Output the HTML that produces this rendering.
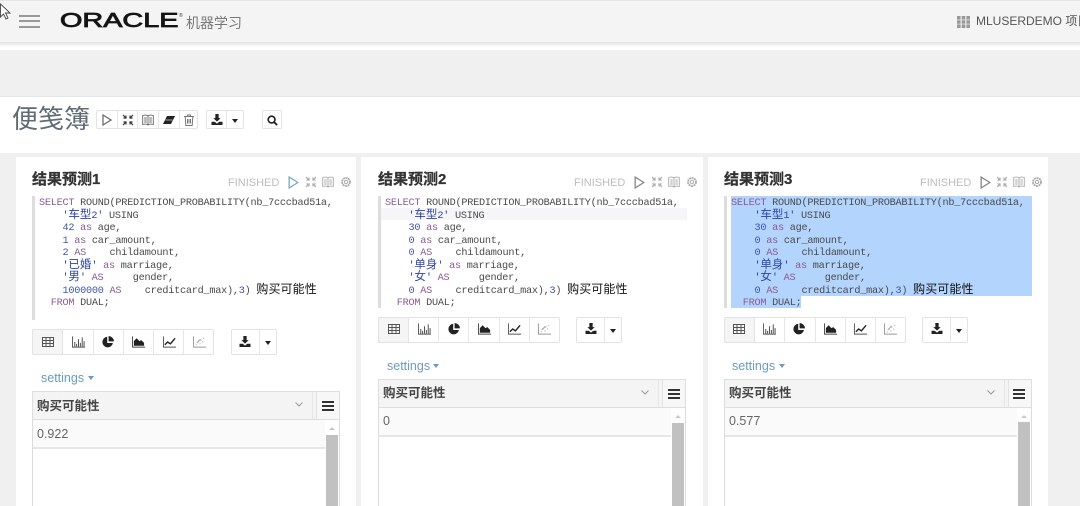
<!DOCTYPE html>
<html><head><meta charset="utf-8">
<style>
html,body{margin:0;padding:0}
body{width:1080px;height:506px;overflow:hidden;position:relative;background:#f0f0f1;font-family:"Liberation Sans","Noto Sans CJK SC",sans-serif;color:#444;filter:blur(.3px)}
div,span,svg,pre{position:absolute}
pre span,.t span{position:static}
.panel{background:#fff;top:157px;height:349px}
.title{font-size:15px;font-weight:bold;color:#333;top:171px;line-height:18px;white-space:nowrap;-webkit-text-stroke:.25px #333}
.fin{font-size:11px;color:#bdbdbd;top:177px;line-height:13px}
pre{margin:0;font:10.2px/12.5px "Liberation Mono","Noto Sans CJK SC",monospace;letter-spacing:-.24px;color:#4a4a4a;white-space:pre;top:198px}
pre .k{color:#8a5a94}pre .n{color:#3f55ad}pre .s{color:#2d44a8}
pre .c{font-size:11.5px;letter-spacing:0;line-height:0}
pre .b{color:#111;font-size:12px;font-family:"Liberation Sans","Noto Sans CJK SC",sans-serif;letter-spacing:.1px;line-height:0}
.bar{width:3px;background:#ddd}
.btn{border:1px solid #e3e3e3;box-sizing:border-box;background:#fff;border-radius:2px}
.set{font-size:12.5px;color:#6a9bc3;line-height:15px}
.car{width:0;height:0;border-left:3.5px solid transparent;border-right:3.5px solid transparent;border-top:4px solid currentColor}
.th{background:#f4f4f4;border:1px solid #dedede;box-sizing:border-box;height:29px;width:308px}
.thx{font-size:12.5px;font-weight:bold;color:#444;line-height:16px;white-space:nowrap}
.val{font-size:12.5px;color:#666;line-height:15px}
.rl{height:2px;background:#e6e6e6}
.bd{width:1px;background:#dcdcdc;top:419px;height:87px}
.sb{width:12px;background:#c1c1c1;height:71px;top:435px}
</style></head><body>
<svg width="0" height="0" style="left:0;top:0">
<defs>
<symbol id="table" viewBox="0 0 12 12"><path d="M.5 1.500h11v9H.5zM.5 4.500h11M.5 7.500h11M4 1.500v9M8 1.500v9" fill="none" stroke="#555" stroke-width="1"/></symbol>
<symbol id="bars" viewBox="0 0 14 12"><path d="M.5 0v11.500H14" fill="none" stroke="#555"/><path d="M3 6v5M5 8v3M7 3v8M9 7v4M11 1v10M13 5v6" stroke="#444" stroke-width="1"/></symbol>
<symbol id="pie" viewBox="0 0 12 12"><path d="M5.200.8A5.300 5.300 0 1 0 10.900 7H5.200zM6.600 0v5.400H12A5.600 5.600 0 0 0 6.600 0z" fill="#222"/></symbol>
<symbol id="area" viewBox="0 0 14 12"><path d="M.5 0v11.500H14" fill="none" stroke="#444"/><path d="M2 10V5l3-3 3 3 2-1 3 3v3z" fill="#222"/></symbol>
<symbol id="line" viewBox="0 0 14 12"><path d="M.5 0v11.500H14" fill="none" stroke="#555"/><path d="M2 9l3-3 3 2 5-6" fill="none" stroke="#222" stroke-width="1.500"/></symbol>
<symbol id="scat" viewBox="0 0 14 12"><path d="M.5 0v11.500H14" fill="none" stroke="#999"/><path d="M3 9h1M5 6h1M7 8h1M8 4h1M10 6h1M11 2h1M4 7l4-4" stroke="#999" stroke-width="1" fill="none"/></symbol>
<symbol id="dl" viewBox="0 0 12 12"><path d="M4.200 0h3.600v4.500H10L6 8.300 2 4.500h2.200zM0 8.500h3.500L6 10.500l2.500-2H12V12H0z" fill="#222"/></symbol>
<symbol id="play" viewBox="0 0 10 12"><path d="M1 1l8 5-8 5z" fill="none" stroke="currentColor" stroke-width="1.200"/></symbol>
<symbol id="exp" viewBox="0 0 12 12"><path d="M1 1l3 3M4 1.500V4H1.500M11 1L8 4M8 1.500V4h2.500M1 11l3-3M4 10.500V8H1.500M11 11L8 8M8 10.500V8h2.500" fill="none" stroke="currentColor" stroke-width="1.200"/></symbol>
<symbol id="book" viewBox="0 0 12 12"><path d="M6 2C5 1 2.500 1 .7 1.500v9C2.500 10 5 10 6 11c1-1 3.500-1 5.300-.5v-9C9.500 1 7 1 6 2zM6 2v9M2.200 4h2.500M2.200 6h2.500M2.200 8h2.500M7.300 4h2.500M7.300 6h2.500M7.300 8h2.500" fill="none" stroke="currentColor" stroke-width=".9"/></symbol>
<symbol id="gear" viewBox="0 0 12 12"><circle cx="6" cy="6" r="4" fill="none" stroke="currentColor" stroke-width="1.800" stroke-dasharray="2 .6"/><circle cx="6" cy="6" r="1.700" fill="none" stroke="currentColor"/></symbol>
<symbol id="eraser" viewBox="0 0 12 9"><path d="M4 0h8L8 8H0z" fill="#222"/><path d="M2.500 4h7" stroke="#fff" stroke-width=".6"/></symbol>
<symbol id="trash" viewBox="0 0 10 12"><path d="M0 2.500h10M3.500 2.500V1h3v1.500M1.200 2.500l.6 9h6.400l.6-9M3.500 5v4.500M5 5v4.500M6.500 5v4.500" fill="none" stroke="#777" stroke-width="1"/></symbol>
<symbol id="search" viewBox="0 0 12 12"><circle cx="5" cy="5" r="3.700" fill="none" stroke="#222" stroke-width="1.800"/><path d="M7.800 7.800L11 11" stroke="#222" stroke-width="2"/></symbol>
</defs></svg>

<!-- header -->
<div style="left:0;top:0;width:1080px;height:43px;background:#f4f4f5;border-top:1px solid #e6e6e6;box-sizing:border-box"></div>
<div style="left:0;top:42px;width:1080px;height:8px;background:linear-gradient(#e2e2e2,#fff 65%)"></div>
<div style="left:0;top:50px;width:1080px;height:46px;background:#f0f0f1"></div>
<div style="left:0;top:96px;width:1080px;height:57px;background:#fff;border-top:1px solid #e8e8e8;box-sizing:border-box"></div>

<!-- cursor -->
<svg style="left:0;top:3px" width="12" height="18" viewBox="0 0 12 18"><path d="M.5 1v13l3-3 2.500 5 2-1-2.500-5H10z" fill="#fff" stroke="#444" stroke-width=".9"/></svg>
<!-- hamburger -->
<div style="left:19px;top:15px;width:21px;height:2px;background:#999"></div>
<div style="left:19px;top:20px;width:21px;height:2px;background:#999"></div>
<div style="left:19px;top:26px;width:21px;height:2px;background:#999"></div>

<span style="left:60px;top:10px;font-size:20px;line-height:22px;color:#151515;transform:scaleX(1.44);transform-origin:0 0;-webkit-text-stroke:.8px #151515;white-space:nowrap">ORACLE</span>
<span style="left:179px;top:13px;font-size:5px;color:#333;line-height:6px">®</span>
<span style="left:186px;top:15px;font-size:14px;line-height:17px;color:#777;white-space:nowrap">机器学习</span>

<svg style="left:957px;top:16px" width="13" height="12" viewBox="0 0 13 12"><path d="M0 0h3.600v3.600H0zM4.700 0h3.600v3.600H4.700zM9.400 0H13v3.600H9.400zM0 4.200h3.600v3.600H0zM4.700 4.200h3.600v3.600H4.700zM9.400 4.200H13v3.600H9.400zM0 8.400h3.600V12H0zM4.700 8.400h3.600V12H4.700zM9.400 8.400H13V12H9.400z" fill="#999"/></svg>
<span style="left:976px;top:14px;font-size:12px;line-height:15px;color:#555;white-space:nowrap">MLUSERDEMO 项目</span>

<!-- notebook title -->
<span style="left:12px;top:103px;font-size:26px;line-height:32px;color:#5f6b75;white-space:nowrap">便笺簿</span>
<div class="btn" style="left:96px;top:110px;width:102px;height:19px"></div>
<div style="left:117px;top:111px;width:1px;height:17px;background:#e6e6e6"></div>
<div style="left:137px;top:111px;width:1px;height:17px;background:#e6e6e6"></div>
<div style="left:158px;top:111px;width:1px;height:17px;background:#e6e6e6"></div>
<div style="left:179px;top:111px;width:1px;height:17px;background:#e6e6e6"></div>
<svg style="left:102px;top:114px;color:#666" width="10" height="12"><use href="#play"/></svg>
<svg style="left:122px;top:114px;color:#333" width="12" height="12"><use href="#exp"/></svg>
<svg style="left:142px;top:114px;color:#666" width="12" height="12"><use href="#book"/></svg>
<svg style="left:163px;top:116px" width="12" height="9"><use href="#eraser"/></svg>
<svg style="left:184px;top:114px" width="10" height="12"><use href="#trash"/></svg>
<div class="btn" style="left:206px;top:110px;width:38px;height:19px"></div>
<div style="left:226px;top:111px;width:1px;height:17px;background:#e6e6e6"></div>
<svg style="left:211px;top:114px" width="12" height="11"><use href="#dl"/></svg>
<div class="car" style="left:232px;top:119px;color:#222"></div>
<div class="btn" style="left:262px;top:110px;width:20px;height:19px"></div>
<svg style="left:267px;top:115px" width="11" height="11"><use href="#search"/></svg>

<!-- PANEL 1 -->
<div class="panel" style="left:16px;width:340px"></div>
<div class="title" style="left:32px">结果预测1</div>
<div class="fin" style="left:228px">FINISHED</div>
<svg style="left:288px;top:176px;color:#7ba7cc" width="11" height="13"><use href="#play"/></svg>
<svg style="left:305px;top:176px;color:#aaa" width="12" height="12"><use href="#exp"/></svg>
<svg style="left:322px;top:176px;color:#aaa" width="12" height="12"><use href="#book"/></svg>
<svg style="left:340px;top:176px;color:#aaa" width="12" height="12"><use href="#gear"/></svg>
<div class="bar" style="left:32px;top:196px;height:124px"></div>
<pre style="left:39px"><span class="k">SELECT</span> ROUND(PREDICTION_PROBABILITY(nb_7cccbad51a,
    <span class="s">'<span class="c">车型</span>2'</span> USING
    <span class="n">42</span> <span class="k">as</span> age,
    <span class="n">1</span> <span class="k">as</span> car_amount,
    <span class="n">2</span> <span class="k">AS</span>    childamount,
    <span class="s">'<span class="c">已婚</span>'</span> <span class="k">as</span> marriage,
    <span class="s">'<span class="c">男</span>'</span> <span class="k">AS</span>     gender,
    <span class="n">1000000</span> <span class="k">AS</span>    creditcard_max),<span class="n">3</span>) <span class="b">购买可能性</span>
  <span class="k">FROM</span> DUAL;</pre>
<div class="btn" style="left:32px;top:329px;width:182px;height:26px"></div>
<div class="btn" style="left:32px;top:329px;width:31px;height:26px;background:#f5f5f5"></div>
<div style="left:93px;top:330px;width:1px;height:24px;background:#e6e6e6"></div>
<div style="left:123px;top:330px;width:1px;height:24px;background:#e6e6e6"></div>
<div style="left:153px;top:330px;width:1px;height:24px;background:#e6e6e6"></div>
<div style="left:183px;top:330px;width:1px;height:24px;background:#e6e6e6"></div>
<svg style="left:42px;top:336px" width="12" height="12"><use href="#table"/></svg>
<svg style="left:72px;top:336px" width="13" height="12"><use href="#bars"/></svg>
<svg style="left:102px;top:336px" width="12" height="12"><use href="#pie"/></svg>
<svg style="left:132px;top:336px" width="13" height="12"><use href="#area"/></svg>
<svg style="left:163px;top:336px" width="13" height="12"><use href="#line"/></svg>
<svg style="left:193px;top:336px" width="13" height="12"><use href="#scat"/></svg>
<div class="btn" style="left:231px;top:329px;width:46px;height:26px"></div>
<div style="left:259px;top:330px;width:1px;height:24px;background:#e6e6e6"></div>
<svg style="left:239px;top:336px" width="12" height="11"><use href="#dl"/></svg>
<div class="car" style="left:265px;top:341px;color:#222"></div>
<span class="set" style="left:41px;top:371px">settings</span>
<div class="car" style="left:88px;top:376px;color:#6a9bc3"></div>
<div class="th" style="left:32px;top:391px"></div>
<div style="left:312px;top:392px;width:1px;height:27px;background:#e6e6e6"></div>
<div style="left:316px;top:392px;width:23px;height:27px;background:#f7f7f7;border-left:1px solid #e2e2e2;box-sizing:border-box"></div>
<span class="thx" style="left:37px;top:398px">购买可能性</span>
<svg style="left:295px;top:402px" width="8" height="5"><path d="M.5.500L4 4l3.500-3.500" fill="none" stroke="#999"/></svg>
<div style="left:322px;top:401px;width:12px;height:2px;background:#333"></div>
<div style="left:322px;top:405px;width:12px;height:2px;background:#333"></div>
<div style="left:322px;top:409px;width:12px;height:2px;background:#333"></div>
<div style="left:33px;top:420px;width:292px;height:27px;background:#fafafa"></div>
<div class="rl" style="left:33px;top:447px;width:292px"></div>
<span class="val" style="left:37px;top:427px">0.922</span>
<div class="bd" style="left:32px"></div><div class="bd" style="left:339px"></div>
<div class="sb" style="left:326px"></div>
<div style="left:329px;top:427px;width:0;height:0;border-left:3px solid transparent;border-right:3px solid transparent;border-bottom:3px solid #c8c8c8"></div>

<!-- PANEL 2 -->
<div class="panel" style="left:361px;width:342px"></div>
<div class="title" style="left:378px">结果预测2</div>
<div class="fin" style="left:574px">FINISHED</div>
<svg style="left:634px;top:176px;color:#888" width="11" height="13"><use href="#play"/></svg>
<svg style="left:651px;top:176px;color:#aaa" width="12" height="12"><use href="#exp"/></svg>
<svg style="left:668px;top:176px;color:#aaa" width="12" height="12"><use href="#book"/></svg>
<svg style="left:686px;top:176px;color:#aaa" width="12" height="12"><use href="#gear"/></svg>
<div class="bar" style="left:378px;top:196px;height:112px"></div>
<div style="left:381px;top:208px;width:306px;height:12px;background:#f6f6f9"></div>
<pre style="left:385px"><span class="k">SELECT</span> ROUND(PREDICTION_PROBABILITY(nb_7cccbad51a,
    <span class="s">'<span class="c">车型</span>2'</span> USING
    <span class="n">30</span> <span class="k">as</span> age,
    <span class="n">0</span> <span class="k">as</span> car_amount,
    <span class="n">0</span> <span class="k">AS</span>    childamount,
    <span class="s">'<span class="c">单身</span>'</span> <span class="k">as</span> marriage,
    <span class="s">'<span class="c">女</span>'</span> <span class="k">AS</span>     gender,
    <span class="n">0</span> <span class="k">AS</span>    creditcard_max),<span class="n">3</span>) <span class="b">购买可能性</span>
  <span class="k">FROM</span> DUAL;</pre>
<div class="btn" style="left:378px;top:317px;width:182px;height:26px"></div>
<div class="btn" style="left:378px;top:317px;width:31px;height:26px;background:#f5f5f5"></div>
<div style="left:438px;top:318px;width:1px;height:24px;background:#e6e6e6"></div>
<div style="left:468px;top:318px;width:1px;height:24px;background:#e6e6e6"></div>
<div style="left:499px;top:318px;width:1px;height:24px;background:#e6e6e6"></div>
<div style="left:529px;top:318px;width:1px;height:24px;background:#e6e6e6"></div>
<svg style="left:388px;top:323px" width="12" height="12"><use href="#table"/></svg>
<svg style="left:418px;top:323px" width="13" height="12"><use href="#bars"/></svg>
<svg style="left:448px;top:323px" width="12" height="12"><use href="#pie"/></svg>
<svg style="left:478px;top:323px" width="13" height="12"><use href="#area"/></svg>
<svg style="left:508px;top:323px" width="13" height="12"><use href="#line"/></svg>
<svg style="left:538px;top:323px" width="13" height="12"><use href="#scat"/></svg>
<div class="btn" style="left:576px;top:317px;width:46px;height:26px"></div>
<div style="left:604px;top:318px;width:1px;height:24px;background:#e6e6e6"></div>
<svg style="left:585px;top:323px" width="12" height="11"><use href="#dl"/></svg>
<div class="car" style="left:610px;top:329px;color:#222"></div>
<span class="set" style="left:387px;top:359px">settings</span>
<div class="car" style="left:433px;top:364px;color:#6a9bc3"></div>
<div class="th" style="left:378px;top:379px"></div>
<div style="left:658px;top:380px;width:1px;height:27px;background:#e6e6e6"></div>
<div style="left:662px;top:380px;width:23px;height:27px;background:#f7f7f7;border-left:1px solid #e2e2e2;box-sizing:border-box"></div>
<span class="thx" style="left:383px;top:385px">购买可能性</span>
<svg style="left:641px;top:390px" width="8" height="5"><path d="M.5.500L4 4l3.500-3.500" fill="none" stroke="#999"/></svg>
<div style="left:668px;top:389px;width:12px;height:2px;background:#333"></div>
<div style="left:668px;top:393px;width:12px;height:2px;background:#333"></div>
<div style="left:668px;top:397px;width:12px;height:2px;background:#333"></div>
<div style="left:379px;top:408px;width:292px;height:27px;background:#fafafa"></div>
<div class="rl" style="left:379px;top:435px;width:292px"></div>
<span class="val" style="left:383px;top:414px">0</span>
<div class="bd" style="left:378px;top:407px;height:99px"></div><div class="bd" style="left:685px;top:407px;height:99px"></div>
<div class="sb" style="left:672px;top:423px;height:83px"></div>
<div style="left:675px;top:415px;width:0;height:0;border-left:3px solid transparent;border-right:3px solid transparent;border-bottom:3px solid #c8c8c8"></div>

<!-- PANEL 3 -->
<div class="panel" style="left:708px;width:340px"></div>
<div class="title" style="left:724px">结果预测3</div>
<div class="fin" style="left:920px">FINISHED</div>
<svg style="left:980px;top:176px;color:#888" width="11" height="13"><use href="#play"/></svg>
<svg style="left:996px;top:176px;color:#aaa" width="12" height="12"><use href="#exp"/></svg>
<svg style="left:1013px;top:176px;color:#aaa" width="12" height="12"><use href="#book"/></svg>
<svg style="left:1031px;top:176px;color:#aaa" width="12" height="12"><use href="#gear"/></svg>
<div class="bar" style="left:724px;top:196px;height:112px"></div>
<div style="left:731px;top:196px;width:301px;height:100px;background:#b3d4fd"></div>
<div style="left:731px;top:296px;width:70px;height:12px;background:#b3d4fd"></div>
<pre style="left:731px"><span class="k">SELECT</span> ROUND(PREDICTION_PROBABILITY(nb_7cccbad51a,
    <span class="s">'<span class="c">车型</span>1'</span> USING
    <span class="n">30</span> <span class="k">as</span> age,
    <span class="n">0</span> <span class="k">as</span> car_amount,
    <span class="n">0</span> <span class="k">AS</span>    childamount,
    <span class="s">'<span class="c">单身</span>'</span> <span class="k">as</span> marriage,
    <span class="s">'<span class="c">女</span>'</span> <span class="k">AS</span>     gender,
    <span class="n">0</span> <span class="k">AS</span>    creditcard_max),<span class="n">3</span>) <span class="b">购买可能性</span>
  <span class="k">FROM</span> DUAL;</pre>
<div class="btn" style="left:724px;top:317px;width:182px;height:26px"></div>
<div class="btn" style="left:724px;top:317px;width:31px;height:26px;background:#f5f5f5"></div>
<div style="left:784px;top:318px;width:1px;height:24px;background:#e6e6e6"></div>
<div style="left:815px;top:318px;width:1px;height:24px;background:#e6e6e6"></div>
<div style="left:845px;top:318px;width:1px;height:24px;background:#e6e6e6"></div>
<div style="left:875px;top:318px;width:1px;height:24px;background:#e6e6e6"></div>
<svg style="left:733px;top:323px" width="12" height="12"><use href="#table"/></svg>
<svg style="left:763px;top:323px" width="13" height="12"><use href="#bars"/></svg>
<svg style="left:793px;top:323px" width="12" height="12"><use href="#pie"/></svg>
<svg style="left:824px;top:323px" width="13" height="12"><use href="#area"/></svg>
<svg style="left:854px;top:323px" width="13" height="12"><use href="#line"/></svg>
<svg style="left:884px;top:323px" width="13" height="12"><use href="#scat"/></svg>
<div class="btn" style="left:922px;top:317px;width:46px;height:26px"></div>
<div style="left:950px;top:318px;width:1px;height:24px;background:#e6e6e6"></div>
<svg style="left:931px;top:323px" width="12" height="11"><use href="#dl"/></svg>
<div class="car" style="left:956px;top:329px;color:#222"></div>
<span class="set" style="left:732px;top:359px">settings</span>
<div class="car" style="left:779px;top:364px;color:#6a9bc3"></div>
<div class="th" style="left:724px;top:379px"></div>
<div style="left:1004px;top:380px;width:1px;height:27px;background:#e6e6e6"></div>
<div style="left:1008px;top:380px;width:23px;height:27px;background:#f7f7f7;border-left:1px solid #e2e2e2;box-sizing:border-box"></div>
<span class="thx" style="left:729px;top:385px">购买可能性</span>
<svg style="left:987px;top:390px" width="8" height="5"><path d="M.5.500L4 4l3.500-3.500" fill="none" stroke="#999"/></svg>
<div style="left:1013px;top:389px;width:12px;height:2px;background:#333"></div>
<div style="left:1013px;top:393px;width:12px;height:2px;background:#333"></div>
<div style="left:1013px;top:397px;width:12px;height:2px;background:#333"></div>
<div style="left:725px;top:408px;width:292px;height:27px;background:#fafafa"></div>
<div class="rl" style="left:725px;top:435px;width:292px"></div>
<span class="val" style="left:729px;top:414px">0.577</span>
<div class="bd" style="left:724px;top:407px;height:99px"></div><div class="bd" style="left:1031px;top:407px;height:99px"></div>
<div class="sb" style="left:1018px;top:422px;height:84px"></div>
<div style="left:1021px;top:415px;width:0;height:0;border-left:3px solid transparent;border-right:3px solid transparent;border-bottom:3px solid #c8c8c8"></div>
</body></html>
